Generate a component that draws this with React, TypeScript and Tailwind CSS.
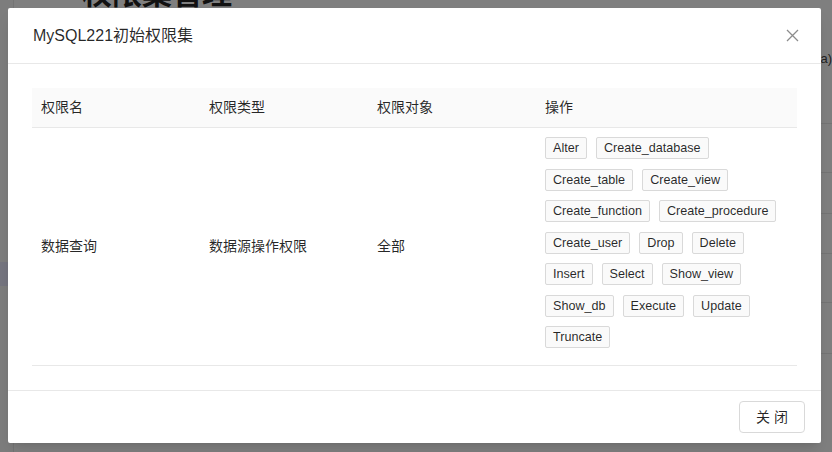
import React from "react";

const FONT = {
  fontFamily: '"Liberation Sans", "Noto Sans CJK SC", Arial, sans-serif',
};

// rows that wrap in the reference: keep the same breaks
const TAG_ROWS = [
  ["Alter", "Create_database"],
  ["Create_table", "Create_view"],
  ["Create_function", "Create_procedure"],
  ["Create_user", "Drop", "Delete"],
  ["Insert", "Select", "Show_view"],
  ["Show_db", "Execute", "Update"],
  ["Truncate"],
];

function Tag({ label }: { label: string }) {
  return (
    <span className="inline-flex h-[22px] items-center rounded-[2px] border border-[#d9d9d9] bg-[#fafafa] px-[7px] text-[12.6px] leading-[20px] text-[rgba(0,0,0,0.85)]">
      {label}
    </span>
  );
}

function BackgroundPage() {
  return (
    <div className="flex h-full w-full bg-white">
      {/* sidebar */}
      <div className="flex w-[14px] flex-col border-r border-[#e8e8e8] bg-[#fafafa]">
        <div className="h-[262px]" />
        <div className="h-[24px] bg-[#eaeaff]" />
      </div>
      <div className="flex flex-1 flex-col">
        <h1 className="-mt-[26px] pl-[68px] text-[30px] font-bold leading-[40px] text-[#222]">
          权限集管理
        </h1>
        <div className="mt-[30px] flex flex-col">
          <div className="flex h-[30px] justify-end text-[13px] leading-[30px] text-[#444]">
            a)
          </div>
          {[50, 49, 41, 40, 49, 51].map((h, i) => (
            <div
              key={i}
              className="border-b border-[#e8e8e8]"
              style={{ height: h }}
            />
          ))}
        </div>
      </div>
    </div>
  );
}

export default function App() {
  return (
    <div
      className="relative h-[452px] w-full overflow-hidden bg-white"
      style={FONT}
    >
      <BackgroundPage />
      <div className="absolute inset-0 bg-black/50" />

      {/* modal */}
      <div className="absolute left-[8px] top-[8px] flex w-[813px] flex-col rounded-[2px] bg-white shadow-lg">
        <div className="flex h-[56px] items-center justify-between border-b border-[#e8e8e8] pl-[25px] pr-[22px]">
          <span className="text-[16px] text-[rgba(0,0,0,0.85)]">
            MySQL221初始权限集
          </span>
          <svg
            width="13"
            height="13"
            viewBox="0 0 13 13"
            className="text-[rgba(0,0,0,0.45)]"
          >
            <path
              d="M1 1 L12 12 M12 1 L1 12"
              stroke="currentColor"
              strokeWidth="1.3"
              fill="none"
            />
          </svg>
        </div>

        <div className="p-[24px]">
          <div className="flex flex-col text-[14px] text-[rgba(0,0,0,0.85)]">
            <div className="grid h-[40px] grid-cols-[168px_168px_168px_1fr] items-center border-b border-[#e8e8e8] bg-[#fafafa]">
              <div className="px-[9px]">权限名</div>
              <div className="px-[9px]">权限类型</div>
              <div className="px-[9px]">权限对象</div>
              <div className="px-[9px]">操作</div>
            </div>
            <div className="grid grid-cols-[168px_168px_168px_1fr] items-center border-b border-[#e8e8e8]">
              <div className="px-[9px]">数据查询</div>
              <div className="px-[9px]">数据源操作权限</div>
              <div className="px-[9px]">全部</div>
              <div className="flex flex-col gap-y-[9.5px] px-[9px] pb-[17px] pt-[9px]">
                {TAG_ROWS.map((row, i) => (
                  <div key={i} className="flex gap-x-[9px]">
                    {row.map((p) => (
                      <Tag key={p} label={p} />
                    ))}
                  </div>
                ))}
              </div>
            </div>
          </div>
        </div>

        <div className="flex justify-end border-t border-[#e8e8e8] px-[16px] py-[10px]">
          <button className="h-[32px] w-[66px] rounded-[4px] border border-[#d9d9d9] bg-white text-[14px] text-[rgba(0,0,0,0.85)]">
            关 闭
          </button>
        </div>
      </div>
    </div>
  );
}
